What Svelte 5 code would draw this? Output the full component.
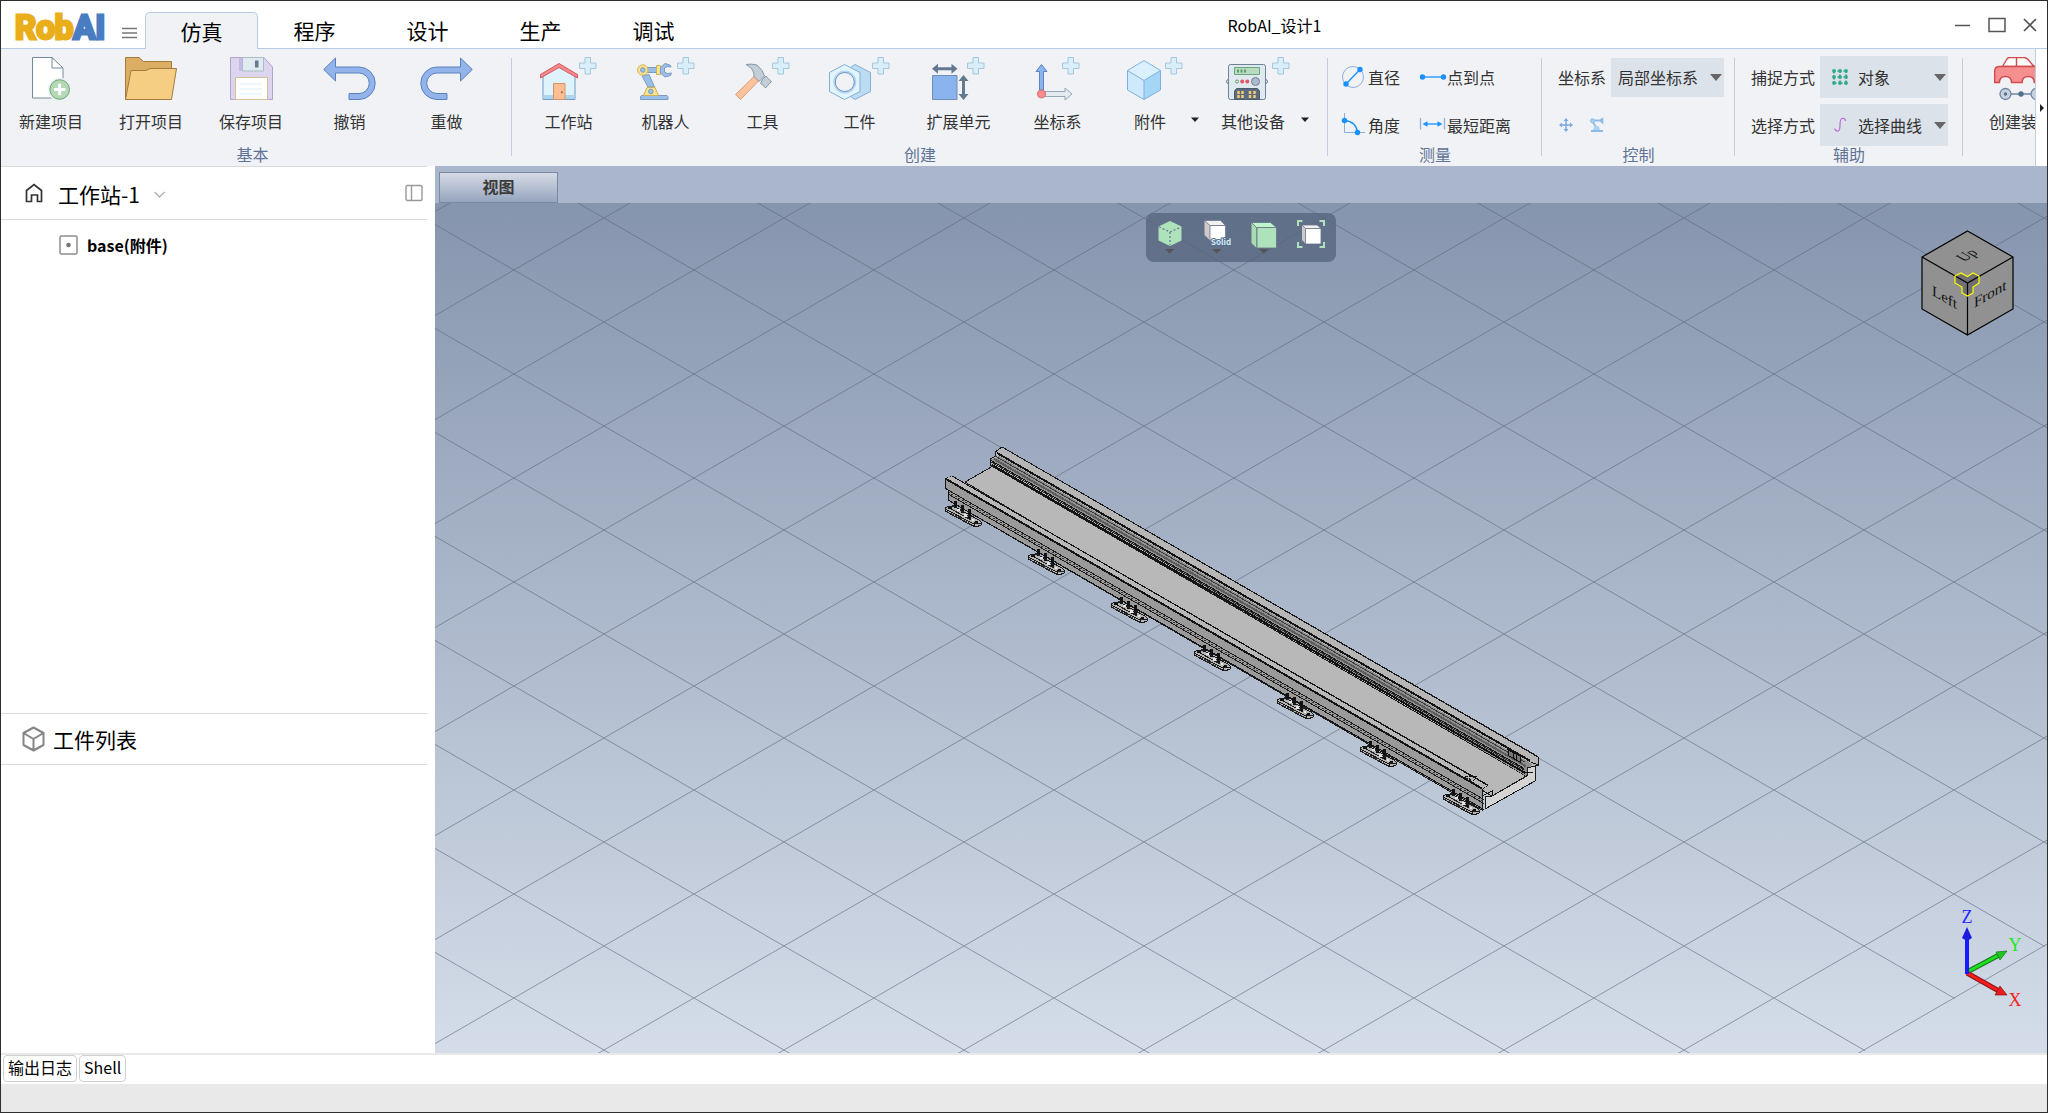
<script lang="ts">
  const menus = ['仿真', '程序', '设计', '生产', '调试'];
  let activeMenu = $state('仿真');

  let coord = $state('局部坐标系');
  let snap = $state('对象');
  let pick = $state('选择曲线');

  // ground grid: isometric lines, 104px apart vertically
  const slope = 52 / 90;
  const left = 435;
  const right = 2047;
  const down = Array.from({ length: 18 }, (_, i) => 120.4 + (i - 9) * 104);
  const up = Array.from({ length: 17 }, (_, i) => 211.6 + i * 104);

  // long edges of the rail: start x, start y, length along x, stroke width, colour
  const edges = [
    [1003, 448, 536, 1, '#1c1c1c'],
    [998, 454, 533, 2, '#141414'],
    [996, 457, 530, 1, '#3a3a3a'],
    [995, 460, 532, 2, '#5c5c5c'],
    [991, 461, 534, 1, '#141414'],
    [992, 463, 533, 1, '#2a2a2a'],
    [993, 466, 533, 2, '#141414'],
    [953, 477, 536, 1, '#141414'],
    [947, 480, 536, 2, '#141414'],
    [949, 491, 536, 1, '#1c1c1c'],
    [949, 495, 536, 1, '#1c1c1c'],
    [949, 501, 536, 1, '#141414']
  ];
  const feet = [0, 1, 2, 3, 4, 5, 6];
</script>

{#snippet plus(x: number)}
  <path transform="translate({x} 0)" d="M6 .5h5.5V6H17v5.500h-5.500V17H6v-5.500H.5V6H6z" fill="#d8eef8" stroke="#a6c6dc" />
{/snippet}

{#snippet caret()}
  <svg width="8" height="5" viewBox="0 0 8 5"><path d="M0 .5h8L4 5z" fill="#222" /></svg>
{/snippet}

<div class="window">
  <header class="titlebar">
    <div class="logo"><span>Rob</span><span class="ai">AI</span></div>
    <button class="burger" aria-label="菜单">
      <svg width="16" height="12" viewBox="0 0 16 12"><path d="M0 1.500h15M0 6h15M0 10.500h15" stroke="#777" stroke-width="1.500" /></svg>
    </button>
    <nav class="menus">
      {#each menus as m}
        <button class="menu" class:active={activeMenu === m} onclick={() => (activeMenu = m)}>{m}</button>
      {/each}
    </nav>
    <div class="title">RobAI_设计1</div>
    <div class="winbtns">
      <button aria-label="最小化"><svg width="16" height="16" viewBox="0 0 16 16"><path d="M0 8.500h15" stroke="#555" stroke-width="1.500" /></svg></button>
      <button aria-label="最大化"><svg width="18" height="16" viewBox="0 0 18 16"><rect x="1" y="1.500" width="16" height="13" fill="none" stroke="#555" stroke-width="1.500" /></svg></button>
      <button aria-label="关闭"><svg width="14" height="16" viewBox="0 0 14 16"><path d="M1 2l12 12M13 2L1 14" stroke="#555" stroke-width="1.700" /></svg></button>
    </div>
  </header>

  <div class="ribbon">
    <div class="groups">
      <section class="group basic">
        <div class="body">
          <button class="tool wide">
            <svg width="38" height="44" viewBox="0 0 38 44">
              <path d="M.5.5H20L31 11.500V41H.5z" fill="#fff" stroke="#74899a" />
              <path d="M20 .5V11h11z" fill="#fff" stroke="#74899a" />
              <circle cx="27.700" cy="32.500" r="12" fill="#f0f2f6" />
              <circle cx="27.700" cy="32.500" r="9.800" fill="#b3d9b5" stroke="#6ba57c" />
              <path d="M22 32.500h11.500M27.700 26.800v11.500" stroke="#fff" stroke-width="3" />
            </svg>
            新建项目
          </button>
          <button class="tool wide">
            <svg width="52" height="44" viewBox="0 0 52 44">
              <path d="M.5 42.500V.5H14l4.500 4H46.500V14L44 42.500z" fill="#dcae64" stroke="#a27b3c" />
              <path d="M.5 42.500L6 13.500h15l4-2h26.500l-5 31z" fill="#f5cd83" stroke="#a27b3c" />
            </svg>
            打开项目
          </button>
          <button class="tool wide">
            <svg width="43" height="44" viewBox="0 0 43 44">
              <path d="M.5.5H34l8.500 9.500v32.500H.5z" fill="#ddd5f0" stroke="#b3a3cf" />
              <path d="M9 1h4v13H9z" fill="#c5b9e6" />
              <path d="M12.500.5h21v13.500h-21z" fill="#dfebf0" stroke="#a9bdc6" />
              <path d="M25 3.500h3.500v7H25z" fill="#66798e" />
              <path d="M5.500 20.500h32v22h-32z" fill="#fff" stroke="#d4c090" />
              <path d="M9.500 27h23M9.500 32h23M9.500 37h23" stroke="#dbeefa" />
            </svg>
            保存项目
          </button>
          <button class="tool">
            <svg width="53" height="44" viewBox="0 0 53 44">
              <path d="M.7 12.500L12.500 1v9H36a16.200 16.200 0 0 1 0 32.500H26V36.500H36a10.200 10.200 0 0 0 0-20.500H12.500v8z" fill="#92b4ea" stroke="#5b81bd" />
            </svg>
            撤销
          </button>
          <button class="tool">
            <svg width="53" height="44" viewBox="0 0 53 44">
              <path transform="translate(53 0) scale(-1 1)" d="M.7 12.500L12.500 1v9H36a16.200 16.200 0 0 1 0 32.500H26V36.500H36a10.200 10.200 0 0 0 0-20.500H12.500v8z" fill="#92b4ea" stroke="#5b81bd" />
            </svg>
            重做
          </button>
        </div>
        <div class="caption">基本</div>
      </section>

      <section class="group create">
        <div class="body">
          <button class="tool">
            <svg width="57" height="44" viewBox="0 0 57 44">
              <path d="M3 19L19 9l16 10v23.500H3z" fill="#dff3fc" stroke="#6f9cc4" />
              <path d="M3.500 38h31v4h-31z" fill="#add5f0" />
              <path d="M.5 21v-3.500L19 6.500l18.500 11V21L19 10.500z" fill="#f38b8b" stroke="#d95763" />
              <path d="M13.500 26.500H25v16H13.500z" fill="#fbbf93" stroke="#d6936b" />
              <circle cx="21.800" cy="35.300" r="1" fill="#9b5c3a" />
              {@render plus(39)}
            </svg>
            工作站
          </button>
          <button class="tool">
            <svg width="58" height="44" viewBox="0 0 58 44">
              <path d="M5 19l7-1.500L17.500 30H11z" fill="#9bbfe6" stroke="#7a9cc4" />
              <path d="M3.500 42.500v-3l1-1h25.500l1 1v3z" fill="#9bbfe6" stroke="#7a9cc4" />
              <path d="M10 30.500h8L21.500 38.500H6.500z" fill="#fbe48b" stroke="#cdb25a" />
              <circle cx="13.800" cy="34.500" r="2.300" fill="#9bbfe6" stroke="#7a9cc4" />
              <path d="M10 10.500h10v5H10z" fill="#9bbfe6" stroke="#7a9cc4" />
              <circle cx="5.800" cy="13" r="5.200" fill="#fbe48b" stroke="#cdb25a" />
              <circle cx="5.800" cy="13" r="2.300" fill="#9bbfe6" stroke="#7a9cc4" />
              <path d="M19.500 8.500h4v9h-4z" fill="#fbe48b" stroke="#cdb25a" />
              <path d="M34 10l-1-2-5-1.500-4.500 4v5.500l4.500 4 5.500-1.500 1-2.500-4 .5-3-1.500v-4l3-1.500z" fill="#9bbfe6" stroke="#7a9cc4" />
              {@render plus(40)}
            </svg>
            机器人
          </button>
          <button class="tool">
            <svg width="55" height="44" viewBox="0 0 55 44">
              <path d="M19.500 19l4.500 4.500L5.500 42.500l-5-5z" fill="#fbc39c" stroke="#dc9f78" />
              <path d="M11 7.500q5-1 11 .5 6 5 7.500 11l-5.500 5.500L19 19.500q1-7-8-12z" fill="#c3ced9" stroke="#8797a6" />
              <path d="M27.500 22.500l3.500-3.500q2 2.500 5.500 5.500l-6 6.500q-2-3-5-4.500z" fill="#c3ced9" stroke="#8797a6" />
              {@render plus(37)}
            </svg>
            工具
          </button>
          <button class="tool">
            <svg width="61" height="44" viewBox="0 0 61 44">
              <path d="M26 7.500l15.500 8v19L26 42.500l-12-8v-19z" fill="#bcdcf3" stroke="#83aed6" />
              <path d="M15.500 7.500l15.500 8v19l-15.500 8-15-8v-19z" fill="#e4f4fc" stroke="#83aed6" />
              <circle cx="15.800" cy="25" r="10.500" fill="#f0f2f6" stroke="#b2d7f2" stroke-width="2" />
              <circle cx="15.800" cy="25" r="9.500" fill="none" stroke="#7393bd" />
              {@render plus(43)}
            </svg>
            工件
          </button>
          <button class="tool wide">
            <svg width="53" height="44" viewBox="0 0 53 44">
              <path d="M.5 18.500H25v24H.5z" fill="#8ab4ee" stroke="#6f8db5" />
              <path d="M4 11.700h18M31.500 22v18" stroke="#64788f" stroke-width="3" />
              <path d="M0 11.700l6-5v10zM25.500 11.700l-6-5v10zM31.500 18l-5 6h10zM31.500 43l-5-6h10z" fill="#64788f" />
              {@render plus(35)}
            </svg>
            扩展单元
          </button>
          <button class="tool">
            <svg width="45" height="44" viewBox="0 0 45 44">
              <path d="M6.500 7.500l5.500 7H8.500V33h-4V14.500H1z" fill="#8ab4ee" stroke="#6083c3" />
              <path d="M10 34.500h20V31l7 6-7 6v-3.500H10z" fill="#e3ebef" stroke="#93a9b5" />
              <circle cx="6.500" cy="37" r="4" fill="#fb8f8f" stroke="#dc6b6b" />
              {@render plus(27)}
            </svg>
            坐标系
          </button>
          <div class="split">
            <button class="tool narrow">
              <svg width="66" height="44" viewBox="-10 0 66 44">
                <path d="M17 3.500l16.500 10L17 23.500.5 13.500z" fill="#daf0fd" />
                <path d="M.5 13.500L17 23.500v19L.5 33z" fill="#cde9fb" />
                <path d="M33.500 13.500L17 23.500v19L33.500 33z" fill="#a6d6f6" />
                <path d="M17 3.500l16.500 10V33L17 42.500.5 33V13.500zM.5 13.500L17 23.500l16.500-10M17 23.500v19" fill="none" stroke="#7fb0de" />
                {@render plus(38)}
              </svg>
              附件
            </button>
            <button class="drop" aria-label="附件列表">{@render caret()}</button>
          </div>
          <div class="split">
            <button class="tool device">
              <svg width="74" height="44" viewBox="-10 0 74 44">
                <circle cx="2.500" cy="24.500" r="2" fill="#dfe9ef" stroke="#6c8296" />
                <circle cx="39.500" cy="24.500" r="2" fill="#dfe9ef" stroke="#6c8296" />
                <rect x="2.500" y="7.500" width="37" height="35" rx="2" fill="#dfe9ef" stroke="#6c8296" />
                <path d="M8.500 10.500h25v7h-25z" fill="#b9dcc0" stroke="#67a97b" />
                <path d="M11 12.500h2v3h-2zM14.500 12.500h2v3h-2zM18 12.500h2v3h-2z" fill="#5d9f6f" />
                <circle cx="11" cy="24.500" r="1.500" fill="#dff0e2" stroke="#5d9f6f" />
                <circle cx="16.200" cy="24.500" r="2" fill="#e05a65" />
                <circle cx="21.300" cy="24.500" r="2" fill="#e05a65" />
                <circle cx="29.500" cy="24.500" r="4" fill="#aebaca" stroke="#6c8296" />
                <path d="M8.500 42.500V34l2-2.500h21l2 2.500v8.500z" fill="#5c6b80" stroke="#4c5b6e" />
                <path d="M12.500 34v7M16.500 34v7M24 34v7M28.500 34v7" stroke="#efcd6f" stroke-width="2.500" stroke-dasharray="3 1" />
                {@render plus(46)}
              </svg>
              其他设备
            </button>
            <button class="drop" aria-label="其他设备列表">{@render caret()}</button>
          </div>
        </div>
        <div class="caption">创建</div>
      </section>

      <section class="group measure">
        <div class="body">
          <div class="pairs">
            <button class="mini">
              <svg width="24" height="24" viewBox="0 0 24 24">
                <circle cx="12" cy="12" r="10.500" fill="none" stroke="#8fb0dd" />
                <path d="M5 19L19 4.500" stroke="#1890ff" stroke-width="1.300" />
                <circle cx="5" cy="19" r="2.700" fill="#1890ff" /><circle cx="19" cy="4.500" r="2.700" fill="#1890ff" />
              </svg>
              直径
            </button>
            <button class="mini tight">
              <svg width="28" height="24" viewBox="0 0 28 24">
                <path d="M4 12h20" stroke="#1890ff" stroke-width="1.300" />
                <circle cx="3.500" cy="12" r="2.700" fill="#1890ff" /><circle cx="24.500" cy="12" r="2.700" fill="#1890ff" />
              </svg>
              点到点
            </button>
            <button class="mini">
              <svg width="24" height="24" viewBox="0 0 24 24">
                <path d="M3.500 0v19.500H24" fill="none" stroke="#8fb0dd" />
                <path d="M3.500 7.500q12 1 13 12.500" fill="none" stroke="#1890ff" stroke-width="1.300" />
                <circle cx="3.500" cy="7.500" r="2.700" fill="#1890ff" /><circle cx="16.500" cy="19.500" r="2.700" fill="#1890ff" />
              </svg>
              角度
            </button>
            <button class="mini tight">
              <svg width="28" height="24" viewBox="0 0 28 24">
                <path d="M1.500 5v11.500M25.500 5v11.500" stroke="#8fb0dd" stroke-width="1.300" />
                <path d="M6 11h15" stroke="#1890ff" stroke-width="1.300" />
                <path d="M3.500 11l5-2.700v5.400zM23.500 11l-5-2.700v5.400z" fill="#1890ff" />
              </svg>
              最短距离
            </button>
          </div>
        </div>
        <div class="caption">测量</div>
      </section>

      <section class="group control">
        <div class="body stack">
          <div class="field">
            <label for="coord">坐标系</label>
            <div class="pickbox frame">
              <select id="coord" bind:value={coord}><option>局部坐标系</option></select>
              <svg class="arrow" width="12" height="7" viewBox="0 0 12 7"><path d="M0 0h12L6 7z" fill="#666" /></svg>
            </div>
          </div>
          <div class="field icons">
            <button class="bare" aria-label="移动">
              <svg width="14" height="14" viewBox="0 0 14 14">
                <path d="M7 2v10M2 7h10" stroke="#7ba8e2" stroke-width="1.500" />
                <path d="M7 0l2.500 3h-5zM7 14l2.500-3h-5zM0 7l3-2.500v5zM14 7l-3-2.500v5z" fill="#7ba8e2" />
              </svg>
            </button>
            <button class="bare" aria-label="机械臂">
              <svg width="14" height="14" viewBox="0 0 14 14">
                <path d="M2 2.500h8L12.500.5v4L10 2.500M2.500 3.500L6 9" fill="none" stroke="#8dbbe8" stroke-width="1.800" />
                <circle cx="2.500" cy="2.800" r="2" fill="#a9d3f0" stroke="#8dbbe8" />
                <path d="M4.500 8h4l1.500 4H3z" fill="#a9d3f0" /><path d="M1 13h12" stroke="#8dbbe8" stroke-width="2" />
              </svg>
            </button>
          </div>
        </div>
        <div class="caption">控制</div>
      </section>

      <section class="group assist">
        <div class="body stack">
          <div class="field">
            <label for="snap">捕捉方式</label>
            <div class="pickbox">
              <svg class="lead" width="16" height="16" viewBox="0 0 16 16">
                <path d="M2 2h12v12H2zM8 2v12M2 8h12" fill="none" stroke="#5a93d8" stroke-dasharray="2 1" />
                {#each [2, 8, 14] as y}
                  {#each [2, 8, 14] as x}
                    <circle cx={x} cy={y} r="1.900" fill="#2fae7d" />
                  {/each}
                {/each}
              </svg>
              <select id="snap" bind:value={snap}><option>对象</option></select>
              <svg class="arrow" width="12" height="7" viewBox="0 0 12 7"><path d="M0 0h12L6 7z" fill="#666" /></svg>
            </div>
          </div>
          <div class="field">
            <label for="pick">选择方式</label>
            <div class="pickbox">
              <svg class="lead" width="16" height="16" viewBox="0 0 16 16">
                <path d="M2.500 11.500q1 3 3.500 2.500c4-1 0-11 4-12.500q3-.5 3.500 2.500" fill="none" stroke="#bb6bd9" stroke-width="1.200" />
              </svg>
              <select id="pick" bind:value={pick}><option>选择曲线</option></select>
              <svg class="arrow" width="12" height="7" viewBox="0 0 12 7"><path d="M0 0h12L6 7z" fill="#666" /></svg>
            </div>
          </div>
        </div>
        <div class="caption">辅助</div>
      </section>

      <section class="group extra">
        <div class="body">
          <button class="tool last">
            <svg width="55" height="44" viewBox="-5 0 55 44">
              <path d="M8.500 9.500L13 2q1-1.500 3-1.500h14q2 0 4 2l6 7zM22.500.5v9" fill="#fff" stroke="#d04c4c" stroke-width="1.400" />
              <path d="M.7 25.500V14q0-4 4-4.500h38q6 1 6 8v8h-8.500q0-6-6-6t-6 6H17.500q0-6-6-6t-6 6z" fill="#f68f8f" stroke="#d04c4c" stroke-width="1.400" />
              <path d="M11.500 37h31" stroke="#6c84a3" stroke-width="1.500" />
              <circle cx="11.500" cy="37" r="5.500" fill="#c9d3de" stroke="#6c84a3" stroke-width="1.300" />
              <circle cx="11.500" cy="37" r="1.700" fill="#55708f" />
              <circle cx="27" cy="37" r="2.700" fill="#55708f" />
              <circle cx="42.500" cy="37" r="5.500" fill="#c9d3de" stroke="#6c84a3" stroke-width="1.300" />
            </svg>
            创建装
          </button>
        </div>
      </section>
    </div>
    <button class="more" aria-label="更多">
      <svg width="4" height="8" viewBox="0 0 4 8"><path d="M0 0l4 4-4 4z" fill="#222" /></svg>
    </button>
  </div>

  <main class="work">
    <aside class="side">
      <div class="station">
        <svg width="18" height="20" viewBox="0 0 18 20"><path d="M1.500 7.500L9 1.500l7.500 6V18.500h-4V12h-6v6.500h-5z" fill="none" stroke="#333" stroke-width="1.700" /></svg>
        <button class="name">工作站-1
          <svg width="11" height="7" viewBox="0 0 11 7"><path d="M.5 1l5 5 5-5" fill="none" stroke="#b0b0b0" stroke-width="1.300" /></svg>
        </button>
        <button class="bare fold" aria-label="折叠">
          <svg width="18" height="18" viewBox="0 0 18 18"><rect x="1" y="1.500" width="16" height="15" rx="1.500" fill="none" stroke="#999" stroke-width="1.400" /><path d="M6.500 2v14" stroke="#999" stroke-width="1.400" /></svg>
        </button>
      </div>
      <div class="tree">
        <div class="node">
          <svg width="19" height="20" viewBox="0 0 19 20"><rect x="1" y="1" width="17" height="18" rx="1.500" fill="none" stroke="#8d8d8d" stroke-width="1.500" /><circle cx="9.500" cy="10" r="2.300" fill="#777" /></svg>
          base(附件)
        </div>
      </div>
      <div class="parts">
        <svg width="23" height="26" viewBox="0 0 23 26"><path d="M11.500 1.500l10 5.500v12l-10 5.500-10-5.500V7zM1.500 7l10 6 10-6M11.500 13v11" fill="none" stroke="#858585" stroke-width="2" stroke-linejoin="round" /></svg>
        工件列表
      </div>
      <div class="partlist"></div>
    </aside>

    <section class="view">
      <div class="viewtabs"><button class="viewtab">视图</button></div>
      <div class="canvas">
        <svg class="scene" viewBox="435 203 1612 850" preserveAspectRatio="xMidYMid slice">
          <clipPath id="ground"><path d="M435 203H2047V945.300L1860 1053.500H435z" /></clipPath>
          <g clip-path="url(#ground)" stroke="#5d6779" stroke-opacity=".6">
            {#each down as y}
              <line x1={left} y1={y} x2={right} y2={y + slope * (right - left)} />
            {/each}
            {#each up as y}
              <line x1={left} y1={y} x2={right} y2={y - slope * (right - left)} />
            {/each}
          </g>

          <g transform="translate(-1 -1)" shape-rendering="crispEdges">
            <!-- rail body -->
            <path d="M966 483L994 467 1529 776 1493 797z" fill="#b8b8b8" stroke="#1c1c1c" />
            <path d="M996 453L1003 448 1539 758V766L1535 768 1527 777 991 466V460L997 457z" fill="#b6b6b6" stroke="#1c1c1c" />
            <path d="M991 461L1000 457 1533 765 1527 777z" fill="#8f8f8f" />
            <path d="M946 480L953 477 1489 786 1483 790V811L949 501V491L946 489z" fill="#9a9a9a" stroke="#1c1c1c" />
            <path d="M946 480L953 477 1489 786 1483 790z" fill="#b8b8b8" />
            <path d="M1486 810V797L1493 797 1528 777V769L1536 767V782z" fill="#d4d4d4" stroke="#1c1c1c" />
            {#each edges as [x, y, len, w, color]}
              <line x1={x} y1={y} x2={x + len} y2={y + len * 0.5775} stroke={color} stroke-width={w} />
            {/each}
            <path d="M949 493L1485 802.500" stroke="#333" stroke-dasharray="2 2" />
            <path d="M946 480V489L949 491V501" fill="none" stroke="#141414" />
            <path d="M1483 790V797L1493 792V797M1539 758V766L1532 763M1526 773H1534" fill="none" stroke="#141414" />
            <path d="M1509 751L1521 757V763L1510 757zM1514 753V760M1517 755V762" fill="#777" stroke="#141414" />
            <path d="M1466 777L1478 777 1474 782 1464 778M1470 775V781" fill="none" stroke="#141414" stroke-dasharray="3 1" />
            <!-- levelling feet -->
            {#each feet as k}
              <g transform="translate({945 + k * 83} {502 + k * 48})">
                <path d="M1 10V7L5 5 11 6 35 19 37 21V24L32 26 27 24z" fill="#b4b4b4" stroke="#1c1c1c" />
                <path d="M1 8L28 22 37 22M4 6L9 9M30 21V25" fill="none" stroke="#1c1c1c" />
                <path d="M3 10.500L28 23.500" stroke="#333" stroke-dasharray="2 1" />
                <path d="M11 0V7M18 4V12M25 8V18" stroke="#111" stroke-width="3" />
                <path d="M8 4L13 7M15 8L20 11M22 14L28 16M29 14L32 15M9 9L27 19" stroke="#222" />
                <path d="M13 8H16V10H13zM20 13H23V16H20zM28 18H30V20H28z" fill="#e4e4e4" />
                <path d="M4 7H8M31 21H34" stroke="#111" stroke-width="2" />
              </g>
            {/each}
          </g>
        </svg>

        <div class="viewtools">
          <button aria-label="视角">
            <svg width="30" height="30" viewBox="0 0 30 30">
              <path d="M15 2l11.500 5.500v14L15 27 3.500 21.500v-14z" fill="#aee2bb" />
              <path d="M4 8l11 5 11-5M15 13v13" fill="none" stroke="#64738c" stroke-width="1.200" stroke-dasharray="2 2" />
            </svg>
            <svg width="10" height="5" viewBox="0 0 10 5"><path d="M0 0h9.500L4.700 4.500z" fill="#555" /></svg>
          </button>
          <button aria-label="显示模式">
            <svg width="30" height="30" viewBox="0 0 30 30">
              <path d="M2.500 1.500h16l5 5V22H8.500L2.500 16z" fill="#cfc9c9" />
              <path d="M2.500 1.500h16l5 5H8z" fill="#f3f0f0" stroke="#64738c" stroke-width=".8" />
              <path d="M8 6.500h15.500V22H8z" fill="#fff" stroke="#64738c" stroke-width=".8" />
              <text x="9" y="26" class="solid">Solid</text>
            </svg>
            <svg width="10" height="5" viewBox="0 0 10 5"><path d="M0 0h9.500L4.700 4.500z" fill="#555" /></svg>
          </button>
          <button aria-label="着色">
            <svg width="30" height="30" viewBox="0 0 30 30">
              <path d="M2.500 3.500l5 5V29l-5-5z" fill="#a8dbb4" />
              <path d="M2.500 3.500h19l6 5h-20z" fill="#bff5ca" stroke="#64738c" stroke-width=".8" />
              <path d="M8 8.500h19.500V29H8z" fill="#aee2bb" stroke="#64738c" stroke-width=".8" />
            </svg>
            <svg width="10" height="5" viewBox="0 0 10 5"><path d="M0 0h9.500L4.700 4.500z" fill="#555" /></svg>
          </button>
          <button aria-label="适合窗口">
            <svg width="30" height="30" viewBox="0 0 30 30">
              <path d="M2 7V2h4.500M23.500 2H28v5M28 23v5h-4.500M6.500 28H2v-5" fill="none" stroke="#aee2bb" stroke-width="2" />
              <path d="M6 6h15l4 3.500V25H10l-4-4z" fill="#cfc9c9" />
              <path d="M6 6h15l4 3.500H9.500z" fill="#f3f0f0" stroke="#64738c" stroke-width=".8" />
              <path d="M9.500 9.500H25V25H9.500z" fill="#fff" stroke="#64738c" stroke-width=".8" />
            </svg>
          </button>
        </div>

        <svg class="navcube" width="94" height="106" viewBox="0 0 94 106">
          <path d="M46.500 1L92 27V79L46.500 105 1 79V27z" fill="#919191" />
          <path d="M34 46L40 43 46.500 46.500 52 43 58 46V53L52 57V63L46.500 66 41 63V57L34 53z" fill="#707070" />
          <path d="M46.500 1L92 27V79L46.500 105 1 79V27zM1 27L46.500 53 92 27M46.500 53V105" fill="none" stroke="#000" stroke-width="1.200" />
          <path d="M34 46L40 43 46.500 46.500 52 43 58 46V53L52 57V63L46.500 66 41 63V57L34 53z" fill="none" stroke="#ff0" stroke-width="1.200" />
          <text class="face" transform="translate(11 65) skewY(30)">Left</text>
          <text class="face" transform="translate(53 78) skewY(-30)">Front</text>
          <text class="face up" transform="translate(43 32) rotate(-30) skewX(30)">Up</text>
        </svg>

        <svg class="triad" width="90" height="120" viewBox="0 0 90 120">
          <path d="M17 67L49 50" stroke="#17761a" stroke-width="5" />
          <path d="M17 67L49 50" stroke="#1fe01f" stroke-width="3" />
          <path d="M57 46L46 47 50 55z" fill="#1fc41f" stroke="#17761a" stroke-width=".7" />
          <path d="M17 68L49 86" stroke="#8c1414" stroke-width="5" />
          <path d="M17 68L49 86" stroke="#f81c1c" stroke-width="3" />
          <path d="M57 90L50 81 45 90z" fill="#e81c1c" stroke="#8c1414" stroke-width=".7" />
          <path d="M17 69V32" stroke="#1a1aff" stroke-width="4" />
          <path d="M17 22L22 33 17 36 12 33z" fill="#1a1ae0" />
          <text x="17" y="18" fill="#2a2aff">Z</text>
          <text x="65" y="46" fill="#1fe81f">Y</text>
          <text x="65" y="101" fill="#f81c1c">X</text>
        </svg>
      </div>
    </section>
  </main>

  <div class="docks">
    <button>输出日志</button>
    <button>Shell</button>
  </div>
  <footer class="status"></footer>
</div>

<style>
  :global(body) {
    margin: 0;
  }
  .window {
    box-sizing: border-box;
    min-height: 100vh;
    display: flex;
    flex-direction: column;
    border: 1px solid #2e2e2e;
    background: #fff;
    color: #000;
    font-family: "Noto Sans CJK SC", "Noto Sans", sans-serif;
    font-size: 16px;
    line-height: 22px;
    overflow: hidden;
  }
  button {
    font: inherit;
    color: inherit;
    background: none;
    border: 0;
    padding: 0;
    cursor: pointer;
  }
  svg {
    display: block;
    flex: none;
  }

  .titlebar {
    display: flex;
    height: 47px;
    border-bottom: 1px solid #b8cbe2;
  }
  .logo {
    width: 105px;
    padding: 7px 0 0 14px;
    box-sizing: border-box;
    font: 700 33px/40px Roboto, sans-serif;
    color: #eaae1a;
    -webkit-text-stroke: 3px #eaae1a;
    white-space: nowrap;
  }
  .logo .ai {
    color: #4a7cc2;
    -webkit-text-stroke-color: #4a7cc2;
  }
  .burger {
    width: 39px;
    padding-top: 16px;
    padding-left: 16px;
  }
  .menus {
    display: flex;
    align-items: flex-end;
  }
  .menu {
    width: 113px;
    height: 36px;
    font-size: 21px;
    line-height: 36px;
  }
  .menu.active {
    position: relative;
    box-sizing: border-box;
    height: 37px;
    margin-bottom: -1px;
    border: 1px solid #b8cbe2;
    border-bottom: 0;
    border-radius: 5px 5px 0 0;
    background: #f0f2f6;
  }
  .title {
    flex: 1;
    text-align: center;
    line-height: 48px;
  }
  .winbtns {
    width: 208px;
    display: flex;
    justify-content: flex-end;
    align-items: center;
    gap: 17px;
    padding-right: 10px;
    box-sizing: border-box;
  }

  .ribbon {
    display: flex;
    height: 117px;
    background: #f0f2f6;
    color: #333;
  }
  .groups {
    flex: 1;
    min-width: 0;
    display: flex;
    overflow-x: clip;
    border-right: 1px solid #c0cedf;
  }
  .group {
    position: relative;
    flex: none;
    box-sizing: border-box;
    padding-top: 7px;
  }
  .group::after {
    content: "";
    position: absolute;
    right: 0;
    top: 9px;
    width: 1px;
    height: 98px;
    background: #c0cedf;
  }
  .basic { width: 511px; padding-right: 8px; }
  .create { width: 816px; }
  .measure { width: 214px; }
  .control { width: 193px; }
  .assist { width: 228px; }
  .extra::after { display: none; }
  .body {
    display: flex;
    height: 87px;
  }
  .create .body { padding-left: 8px; }
  .caption {
    height: 23px;
    line-height: 23px;
    text-align: center;
    color: #5f7396;
  }
  .tool {
    width: 97px;
    display: flex;
    flex-direction: column;
    align-items: center;
    gap: 9px;
    padding-top: 1px;
    white-space: nowrap;
  }
  .tool.wide { width: 101px; }
  .basic .tool.wide { width: 100px; }
  .tool.narrow { width: 76px; }
  .tool.device { width: 90px; }
  .tool.last {
    width: 60px;
    margin-left: 26px;
    align-items: flex-start;
  }
  .split {
    display: flex;
    padding-left: 6px;
  }
  .drop {
    width: 14px;
    height: 87px;
    padding: 40px 3px 0;
  }
  .pairs {
    display: grid;
    grid-template-columns: auto auto;
    grid-auto-rows: 42px;
    gap: 6px 19px;
    padding-left: 13px;
  }
  .mini {
    display: flex;
    align-items: center;
    gap: 3px;
    white-space: nowrap;
  }
  .mini.tight { gap: 0; }
  .stack {
    flex-direction: column;
    gap: 6px;
    padding-left: 16px;
  }
  .field {
    flex: none;
    display: flex;
    align-items: center;
    gap: 5px;
    height: 42px;
  }
  .icons {
    gap: 17px;
    padding-left: 1px;
  }
  .pickbox {
    position: relative;
    width: 128px;
    height: 42px;
    background: #dce2ea;
  }
  .frame {
    width: 113px;
    height: 39px;
  }
  .pickbox select {
    appearance: none;
    width: 100%;
    height: 100%;
    border: 0;
    padding: 0 0 0 38px;
    background: none;
    font: inherit;
    color: inherit;
  }
  .frame select { padding-left: 7px; }
  .arrow {
    position: absolute;
    right: 2px;
    top: 50%;
    margin-top: -3px;
    pointer-events: none;
  }
  .lead {
    position: absolute;
    left: 12px;
    top: 13px;
  }
  .more {
    width: 11px;
    padding-left: 4px;
    background: #fff;
  }

  .work {
    flex: 1;
    display: flex;
    min-height: 0;
  }
  .side {
    width: 426px;
    margin-right: 8px;
    display: flex;
    flex-direction: column;
  }
  .station, .parts {
    display: flex;
    align-items: center;
    border-top: 1px solid #dadada;
    border-bottom: 1px solid #dadada;
    font-size: 21px;
  }
  .station {
    height: 52px;
    padding: 0 4px 0 24px;
    gap: 15px;
  }
  .name {
    display: flex;
    align-items: center;
    gap: 14px;
    padding-top: 2px;
    line-height: 50px;
  }
  .fold { margin-left: auto; }
  .tree { flex: 493; }
  .node {
    display: flex;
    align-items: center;
    gap: 9px;
    padding: 14px 0 0 58px;
    font-weight: 700;
  }
  .parts {
    height: 50px;
    padding-left: 21px;
    gap: 8px;
  }
  .partlist { flex: 288; }

  .view {
    flex: 1;
    min-width: 0;
    display: flex;
    flex-direction: column;
  }
  .viewtabs {
    height: 31px;
    padding: 6px 0 0 4px;
    background: #aab6cb;
  }
  .viewtab {
    box-sizing: border-box;
    display: block;
    width: 119px;
    height: 31px;
    border: 1px solid #7b8aa3;
    background: linear-gradient(#d5dbe6, #96a5bd);
    color: #3b3b3b;
    font-weight: 700;
    line-height: 27px;
    padding-bottom: 2px;
  }
  .canvas {
    flex: 1;
    position: relative;
    min-height: 300px;
    background: linear-gradient(#8695ae, #d4dde9);
    overflow: hidden;
  }
  .scene {
    position: absolute;
    inset: 0;
    width: 100%;
    height: 100%;
  }
  .viewtools {
    position: absolute;
    top: 10px;
    left: 50%;
    transform: translateX(-50%);
    display: flex;
    box-sizing: border-box;
    height: 49px;
    padding-right: 2px;
    border-radius: 8px;
    background: rgba(84, 99, 124, 0.75);
  }
  .viewtools button {
    width: 47px;
    display: flex;
    flex-direction: column;
    align-items: center;
    padding-top: 6px;
  }
  .solid {
    font: 700 8px "Noto Sans CJK SC", sans-serif;
    fill: #dcebf5;
    stroke: #55708f;
    stroke-width: 2px;
    paint-order: stroke;
  }
  .navcube {
    position: absolute;
    top: 27px;
    right: 32px;
  }
  .face {
    font: 15px "Liberation Serif", serif;
    fill: #111;
  }
  .face.up { font-size: 14px; }
  .triad {
    position: absolute;
    right: 7px;
    bottom: 28px;
  }
  .triad text {
    font: 18px "Liberation Serif", serif;
    text-anchor: middle;
  }

  .docks {
    display: flex;
    gap: 2px;
    height: 29px;
    padding-left: 2px;
    border-top: 2px solid #e8e8e8;
  }
  .docks button {
    box-sizing: border-box;
    height: 27px;
    padding: 0 4px 2px;
    border: 1px solid #cfcfcf;
    border-radius: 4px;
    line-height: 23px;
  }
  .status {
    height: 28px;
    background: #e9e9e9;
  }
</style>
